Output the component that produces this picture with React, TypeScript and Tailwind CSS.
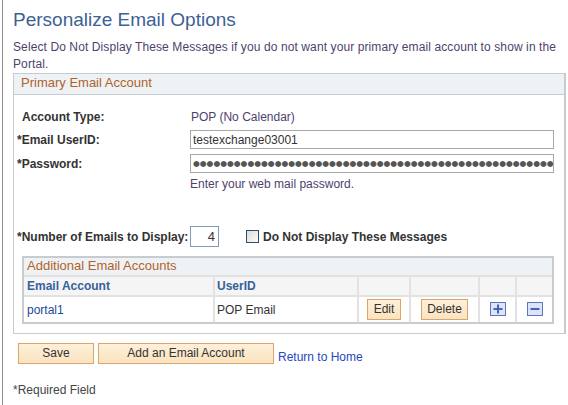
import type { ReactNode } from "react";

const FONT = { fontFamily: '"Liberation Sans", Arial, sans-serif' };

function Label({ children }: { children: ReactNode }) {
  return <div className="w-[173px] shrink-0 font-bold text-[#333333]">{children}</div>;
}

function PlusIcon() {
  return (
    <svg width="16" height="14" viewBox="0 0 16 14">
      <rect x="0.5" y="0.5" width="15" height="13" fill="#dbe4f8" stroke="#5d74c0" />
      <rect x="3.5" y="6" width="9" height="2" fill="#4660b3" />
      <rect x="7" y="2.5" width="2" height="9" fill="#4660b3" />
    </svg>
  );
}

function MinusIcon() {
  return (
    <svg width="16" height="14" viewBox="0 0 16 14">
      <rect x="0.5" y="0.5" width="15" height="13" fill="#dbe4f8" stroke="#5d74c0" />
      <rect x="3.5" y="6" width="9" height="2" fill="#4660b3" />
    </svg>
  );
}

function PsButton({ children, className = "" }: { children: ReactNode; className?: string }) {
  return (
    <button
      type="button"
      className={
        "h-[21px] border border-[#dca56c] bg-gradient-to-b from-[#fdf0da] to-[#fbe3bf] text-[12px] leading-[19px] text-[#333333] " +
        className
      }
    >
      {children}
    </button>
  );
}

export default function App() {
  return (
    <div style={FONT} className="min-h-[405px] bg-white ml-[2px] border-l border-[#8e8e8e] pl-[10px] text-[12px] leading-[14px]">
      <h1 className="pt-[8px] text-[19px] leading-[24px] text-[#3e6193]">Personalize Email Options</h1>
      <p className="mt-[7px] w-[553px] leading-[17px] tracking-[0.1px] text-[#4f3f6e]">
        Select Do Not Display These Messages if you do not want your primary email account to show in the Portal.
      </p>

      {/* primary email group box */}
      <div className="w-[553px] border border-r-2 border-[#c6cbd0] pb-[9px]">
        <div className="h-[21px] border-b border-[#c6cbd0] bg-[#eef2f4] pl-[7px] text-[13px] leading-[18px] text-[#b0622c]">
          Primary Email Account
        </div>

        <div className="pl-[3px]">
          <div className="mt-[15px] flex h-[14px] items-center">
            <div className="w-[173px] shrink-0 pl-[5px] font-bold text-[#333333]">Account Type:</div>
            <div className="pl-[1px] text-[#4f3f6e]">POP (No Calendar)</div>
          </div>

          <div className="mt-[6px] flex h-[19px] items-center">
            <Label>*Email UserID:</Label>
            <input
              readOnly
              value="testexchange03001"
              className="h-[19px] w-[364px] border border-[#a9a9a9] px-[2px] text-[12px] text-[#333333] outline-none"
            />
          </div>

          <div className="mt-[5px] flex h-[19px] items-center">
            <Label>*Password:</Label>
            <div
              style={{ fontFamily: '"DejaVu Sans", sans-serif' }}
              className="h-[19px] w-[364px] overflow-hidden whitespace-nowrap border border-[#a9a9a9] pl-[2px] text-[7.8px] leading-[17px] text-[#555555]"
            >
              {"●".repeat(72)}
            </div>
          </div>

          <div className="mt-[4px] pl-[173px] text-[#4f3f6e]">Enter your web mail password.</div>

          <div className="mt-[35px] flex h-[21px] items-center">
            <Label>*Number of Emails to Display:</Label>
            <input
              readOnly
              value="4"
              className="h-[21px] w-[29px] border border-[#7f9db9] px-[3px] text-right text-[13px] text-[#333333] outline-none"
            />
            <div className="ml-[27px] h-[13px] w-[13px] border border-[#2b4d78] bg-gradient-to-br from-[#dcdcd7] to-[#fbfbf9]" />
            <div className="ml-[4px] font-bold text-[#333333]">Do Not Display These Messages</div>
          </div>

          {/* additional accounts grid */}
          <div className="ml-[5px] mt-[9px] w-[532px] border-2 border-[#c8ccd0]">
            <div className="h-[17px] bg-[#eff2f4] pl-[3px] text-[13px] leading-[16px] text-[#b0622c]">
              Additional Email Accounts
            </div>
            <div className="flex h-[20px] border-t-2 border-[#e2e2e2] bg-[#f5f5f5] font-bold leading-[18px] text-[#36619a]">
              <div className="w-[189px] pl-[3px]">Email Account</div>
              <div className="w-[144px] border-l-2 border-[#e2e2e2] pl-[2px]">UserID</div>
              <div className="w-[52px] border-l-2 border-[#e2e2e2]" />
              <div className="w-[69px] border-l-2 border-[#e2e2e2]" />
              <div className="w-[37px] border-l-2 border-[#e2e2e2]" />
              <div className="flex-1 border-l-2 border-[#e2e2e2]" />
            </div>
            <div className="flex h-[27px] border-t-2 border-[#e2e2e2] bg-white">
              <div className="flex w-[189px] items-center pl-[3px] text-[#23489a]">portal1</div>
              <div className="flex w-[144px] items-center border-l-2 border-[#e2e2e2] pl-[2px] text-[#333333]">POP Email</div>
              <div className="flex w-[52px] items-center justify-center border-l-2 border-[#e2e2e2]">
                <PsButton className="w-[34px]">Edit</PsButton>
              </div>
              <div className="flex w-[69px] items-center justify-center border-l-2 border-[#e2e2e2]">
                <PsButton className="w-[47px]">Delete</PsButton>
              </div>
              <div className="flex w-[37px] items-center justify-center border-l-2 border-[#e2e2e2] pb-[2px]">
                <PlusIcon />
              </div>
              <div className="flex flex-1 items-center justify-center border-l-2 border-[#e2e2e2] pb-[2px]">
                <MinusIcon />
              </div>
            </div>
          </div>
        </div>
      </div>

      <div className="mt-[9px] flex items-end pl-[5px]">
        <PsButton className="w-[76px]">Save</PsButton>
        <PsButton className="ml-[4px] w-[176px]">Add an Email Account</PsButton>
        <a href="#" className="ml-[4px] leading-[14px] text-[#2846bd]">Return to Home</a>
      </div>

      <div className="mt-[19px] text-[#444444]">*Required Field</div>
    </div>
  );
}
